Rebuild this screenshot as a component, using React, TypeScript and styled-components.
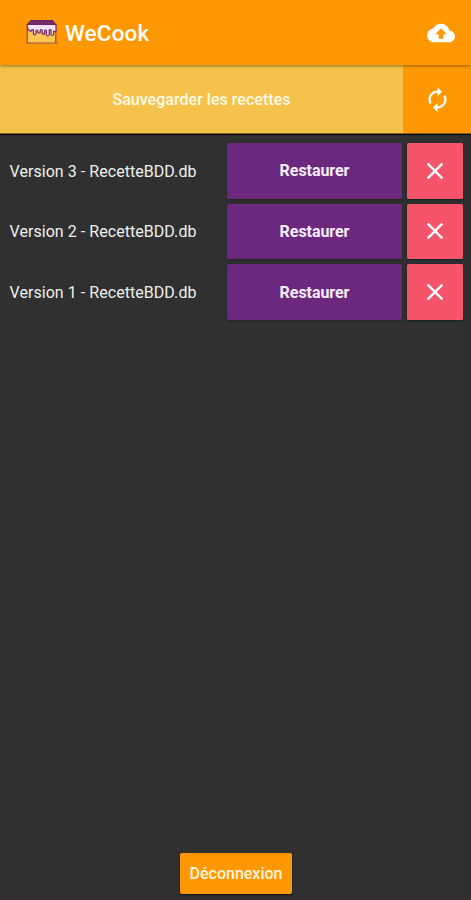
import React from "react";
import styled, { createGlobalStyle } from "styled-components";
import { MdAutorenew, MdBackup, MdClose } from "react-icons/md";

const GlobalStyle = createGlobalStyle`
  *, *::before, *::after { box-sizing: border-box; }
  body { margin: 0; background: #303030; }
  button { border: 0; padding: 0; margin: 0; font-family: inherit; color: inherit; cursor: pointer; }
`;

const Screen = styled.div`
  display: flex;
  flex-direction: column;
  height: 900px;
  background: #303030;
  border-bottom: 1px solid #382c34;
  color: #fff;
  font-family: Roboto, "Liberation Sans", sans-serif;
  overflow: hidden;
`;

const AppBar = styled.header`
  position: relative;
  z-index: 1;
  flex: none;
  display: flex;
  align-items: center;
  height: 65px;
  padding: 0 16px 0 25px;
  background: #ff9800;
  box-shadow: 0 1px 3px rgba(60, 45, 0, 0.55);
`;

const Logo = styled.svg`
  flex: none;
  width: 33px;
  height: 28px;
  margin-right: 7px;
  margin-bottom: 2px;
`;

const Title = styled.h1`
  flex: 1;
  margin: 0;
  padding-top: 1px;
  font-size: 22.5px;
  font-weight: 500;
  line-height: 28px;
  letter-spacing: 0.15px;
`;

const IconButton = styled.button`
  display: flex;
  background: none;
  font-size: 28px;
`;

const Actions = styled.div`
  flex: none;
  display: flex;
  height: 69px;
  border-bottom: 1px solid #8a6119;
  box-shadow: 0 1px 1px #050b1b;
`;

const SaveButton = styled.button`
  width: 403px;
  background: #f5c24c;
  color: #fffbe9;
  font-size: 16px;
  font-weight: 500;
  letter-spacing: 0.03px;
`;

const RefreshButton = styled.button`
  flex: 1;
  display: flex;
  align-items: center;
  justify-content: center;
  background: #ff9800;
  font-size: 27px;
`;

const VersionList = styled.ul`
  flex: 1;
  display: flex;
  flex-direction: column;
  gap: 5.2px;
  margin: 0;
  padding: 9px 8.5px 0 9.5px;
  list-style: none;
`;

const VersionRow = styled.li`
  display: grid;
  grid-template-columns: 1fr 175px 55.5px;
  column-gap: 5px;
  align-items: stretch;
  height: 55.5px;
`;

const VersionName = styled.span`
  align-self: center;
  padding-top: 1.5px;
  color: #efefef;
  font-size: 16px;
  line-height: 20px;
  letter-spacing: 0.05px;
  white-space: nowrap;
`;

const RowButton = styled.button<{ $tone: "restore" | "remove" }>`
  display: flex;
  align-items: center;
  justify-content: center;
  border-radius: 1.5px;
  background: ${({ $tone }) => ($tone === "restore" ? "#6c287f" : "#f5546b")};
  box-shadow: 0 1px 2px
    ${({ $tone }) => ($tone === "restore" ? "rgba(20, 30, 20, 0.6)" : "rgba(5, 35, 38, 0.9)")};
  color: ${({ $tone }) => ($tone === "restore" ? "#f8eefb" : "#fff")};
  font-size: ${({ $tone }) => ($tone === "restore" ? "16px" : "28px")};
  font-weight: 700;
  letter-spacing: -0.05px;
`;

const Footer = styled.footer`
  flex: none;
  display: flex;
  justify-content: center;
  padding: 0 0 5px 1px;
`;

const LogoutButton = styled.button`
  width: 112px;
  height: 41px;
  border-radius: 2px;
  background: #ff9800;
  box-shadow: 0 1px 2px rgba(0, 10, 25, 0.75);
  color: #fff6df;
  font-size: 16px;
  font-weight: 500;
`;

const VERSIONS = [3, 2, 1];

function CakeLogo() {
  return (
    <Logo viewBox="0 0 33 28" aria-hidden="true">
      <path d="M2.5 8h28v17h-28z" fill="#ffc450" />
      <path d="M2.2 10v14.5M30.8 10v14.5M1 25h31.5" fill="none" stroke="#a2485a" strokeWidth="1.2" />
      <path
        d="M2 6.5h29v6.5q-1.2 1.5-2.4 0v3.5q-1.3 1.8-2.6 0V12q-1-1-1.8 0v5q-1.4 1.8-2.8 0V12.5q-1-1-1.8 0v3q-1.2 1.4-2.4 0V12q-1.2-1-2 0v2.3q-1.2 1.5-2.4 0v-1.8q-1-1-1.8 0v3.5q-1.2 1.6-2.5 0V12q-1-.8-1.7 0-.8 2.6-2.4 0-1-.4-1.4 0z"
        fill="#f3e2f3"
        stroke="#702667"
        strokeWidth="1.2"
        strokeLinejoin="round"
      />
      <path d="M5.5 2h22.5L31.5 7h-30z" fill="#702667" />
      <path d="M6 4.8h22" fill="none" stroke="#a54d83" strokeWidth="0.9" strokeDasharray="1.5 2" />
    </Logo>
  );
}

export default function App() {
  return (
    <>
      <GlobalStyle />
      <Screen>
        <AppBar>
          <CakeLogo />
          <Title>WeCook</Title>
          <IconButton aria-label="Sauvegarde">
            <MdBackup />
          </IconButton>
        </AppBar>
        <Actions>
          <SaveButton>Sauvegarder les recettes</SaveButton>
          <RefreshButton aria-label="Actualiser">
            <MdAutorenew />
          </RefreshButton>
        </Actions>
        <VersionList>
          {VERSIONS.map((version) => (
            <VersionRow key={version}>
              <VersionName>Version {version} - RecetteBDD.db</VersionName>
              <RowButton $tone="restore">Restaurer</RowButton>
              <RowButton $tone="remove" aria-label="Supprimer">
                <MdClose />
              </RowButton>
            </VersionRow>
          ))}
        </VersionList>
        <Footer>
          <LogoutButton>Déconnexion</LogoutButton>
        </Footer>
      </Screen>
    </>
  );
}
